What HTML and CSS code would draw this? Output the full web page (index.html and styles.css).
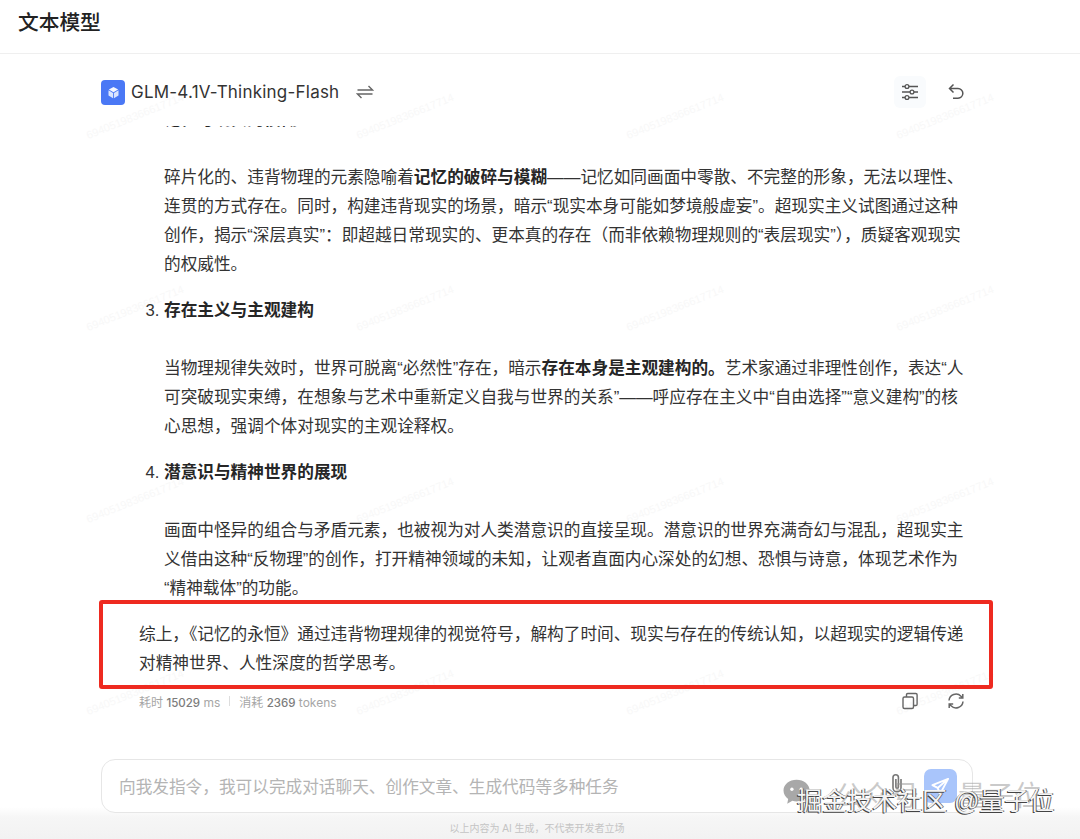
FILE: index.html
```html
<!DOCTYPE html>
<html lang="zh">
<head>
<meta charset="utf-8">
<title>文本模型</title>
<link rel="stylesheet" href="styles.css">
</head>
<body>
<div class="watermarks" aria-hidden="true">
  <span>69405198366617714</span><span>69405198366617714</span><span>69405198366617714</span><span>69405198366617714</span>
  <span>69405198366617714</span><span>69405198366617714</span><span>69405198366617714</span><span>69405198366617714</span>
  <span>69405198366617714</span><span>69405198366617714</span><span>69405198366617714</span><span>69405198366617714</span>
  <span>69405198366617714</span><span>69405198366617714</span><span>69405198366617714</span><span>69405198366617714</span>
</div>
<div class="page">
  <header class="topbar"><h1>文本模型</h1></header>
  <main class="chat">
    <div class="toolbar">
      <div class="model">
        <span class="model-logo">
          <svg viewBox="0 0 24 24" width="15" height="15"><path d="M12 3l7.500 4.300L12 11.600 4.500 7.300z" fill="#fff" opacity=".95"/><path d="M4 8.500l7.300 4.200V21L4 16.800z" fill="#dbe6ff"/><path d="M20 8.500l-7.300 4.200V21l7.300-4.200z" fill="#fff" opacity=".8"/></svg>
        </span>
        <span class="model-name">GLM-4.1V-Thinking-Flash</span>
        <svg class="swap" viewBox="0 0 18 16" width="18" height="16"><path d="M1.500 6h15L12.500 2M16.500 10h-15L5.500 14" fill="none" stroke="#666" stroke-width="1.400"/></svg>
      </div>
      <div class="tools">
        <span class="tool tool-active">
          <svg viewBox="0 0 18 18" width="18" height="18" fill="none" stroke="#555" stroke-width="1.300"><path d="M1 3.500h3M8 3.500h9M1 9h8M13 9h4M1 14.500h3M8 14.500h9"/><circle cx="6" cy="3.500" r="1.900"/><circle cx="11" cy="9" r="1.900"/><circle cx="6" cy="14.500" r="1.900"/></svg>
        </span>
        <span class="tool">
          <svg viewBox="0 0 18 18" width="18" height="18" fill="none" stroke="#555" stroke-width="1.500"><path d="M6.500 1.500L2.500 5.500l4 4M2.500 5.500h8.500a4.800 4.800 0 0 1 0 9.700H6"/></svg>
        </span>
      </div>
    </div>
    <div class="scroll">
      <div class="answer">
        <ol class="points" start="2">
          <li><p class="point-title">记忆与现实的模糊</p></li>
        </ol>
        <p class="body">碎片化的、违背物理的元素隐喻着<b>记忆的破碎与模糊</b>——记忆如同画面中零散、不完整的形象，无法以理性、<br>连贯的方式存在。同时，构建违背现实的场景，暗示“现实本身可能如梦境般虚妄”。超现实主义试图通过这种<br>创作，揭示“深层真实”：即超越日常现实的、更本真的存在（而非依赖物理规则的“表层现实”），质疑客观现实<br>的权威性。</p>
        <ol class="points" start="3">
          <li><p class="point-title">存在主义与主观建构</p></li>
        </ol>
        <p class="body">当物理规律失效时，世界可脱离“必然性”存在，暗示<b>存在本身是主观建构的。</b>艺术家通过非理性创作，表达“人<br>可突破现实束缚，在想象与艺术中重新定义自我与世界的关系”——呼应存在主义中“自由选择”“意义建构”的核<br>心思想，强调个体对现实的主观诠释权。</p>
        <ol class="points" start="4">
          <li><p class="point-title">潜意识与精神世界的展现</p></li>
        </ol>
        <p class="body">画面中怪异的组合与矛盾元素，也被视为对人类潜意识的直接呈现。潜意识的世界充满奇幻与混乱，超现实主<br>义借由这种“反物理”的创作，打开精神领域的未知，让观者直面内心深处的幻想、恐惧与诗意，体现艺术作为<br>“精神载体”的功能。</p>
        <p class="summary">综上，《记忆的永恒》通过违背物理规律的视觉符号，解构了时间、现实与存在的传统认知，以超现实的逻辑传递<br>对精神世界、人性深度的哲学思考。</p>
      </div>
    </div>
    <div class="meta">
      <div class="stats">
        <span>耗时 <em>15029</em> ms</span>
        <i class="sep"></i>
        <span>消耗 <em>2369</em> tokens</span>
      </div>
      <div class="tools">
        <span class="tool">
          <svg viewBox="0 0 18 18" width="18" height="18" fill="none" stroke="#666" stroke-width="1.400"><rect x="2" y="5" width="10.500" height="11.500" rx="1.500"/><path d="M5.500 5V2.800q0-1.300 1.300-1.300h8q1.300 0 1.300 1.300v9.400q0 1.300-1.300 1.300h-2.800"/></svg>
        </span>
        <span class="tool">
          <svg viewBox="0 0 18 18" width="18" height="18" fill="none" stroke="#666" stroke-width="1.500"><path d="M2 8.500a7 7 0 0 1 12-4.300L15.800 6M15.800 2v4h-4M16 9.500a7 7 0 0 1-12 4.300L2.200 12M2.200 16v-4h4"/></svg>
        </span>
      </div>
    </div>
  </main>
  <div class="composer-wrap">
    <div class="composer">
      <span class="placeholder">向我发指令，我可以完成对话聊天、创作文章、生成代码等多种任务</span>
      <div class="composer-actions">
        <svg class="clip" viewBox="0 0 20 28" width="16" height="24" fill="none" stroke="#777" stroke-width="2"><path d="M15 9v11a5 5 0 0 1-10 0V7a3.400 3.400 0 0 1 6.800 0v12a1.600 1.600 0 0 1-3.200 0V9"/></svg>
        <span class="send">
          <svg viewBox="0 0 20 20" width="19" height="19" fill="none" stroke="#fff" stroke-width="2" stroke-linejoin="round"><path d="M18 2L1.500 8.500 7 11.500l2.500 6.500zM18 2L7 11.500"/></svg>
        </span>
      </div>
    </div>
    <p class="disclaimer">以上内容为 AI 生成，不代表开发者立场</p>
  </div>
</div>

<div class="highlight"></div>

<div class="wechat-mark">
  <svg class="wechat-logo" viewBox="0 0 32 30" width="31" height="28"><path d="M15 2C7.300 2 1 7 1 13.500c0 3.600 2 6.800 5 9l-1 5 5.500-3c1.400.4 2.900.6 4.500.6 7.700 0 14-5.100 14-11.600S22.700 2 15 2z" fill="#a8a8a8"/><circle cx="10" cy="12" r="1.800" fill="#fff"/><circle cx="20" cy="12" r="1.800" fill="#fff"/></svg>
  <span class="wechat-name">公众号</span>
  <span class="wechat-account">量子位</span>
</div>
<div class="site-mark">掘金技术社区 @量子位</div>
</body>
</html>
```

FILE: styles.css
```css
* { box-sizing: border-box; }
html, body { margin: 0; height: 839px; overflow: hidden; }
body {
  background: #fff;
  color: #2b2b2b;
  font-family: "Liberation Sans", "Noto Sans CJK SC", sans-serif;
  position: relative;
}
.page {
  display: flex;
  flex-direction: column;
  height: 839px;
  position: relative;
}

.topbar {
  height: 54px;
  flex: none;
  padding: 8px 18px 0;
  border-bottom: 1px solid #efefef;
}
.topbar h1 {
  margin: 0;
  font-size: 20.700px;
  font-weight: 500;
  line-height: 30px;
  color: #222;
}

.chat {
  flex: none;
  height: 705px;
  padding: 0 108px 0 101px;
  display: flex;
  flex-direction: column;
}
.toolbar {
  flex: none;
  height: 72px;
  display: flex;
  align-items: center;
  justify-content: space-between;
  padding-top: 4px;
}
.model { display: flex; align-items: center; }
.model-logo {
  width: 24px;
  height: 25px;
  border-radius: 4px;
  background: #4a78f5;
  display: flex;
  align-items: center;
  justify-content: center;
}
.model-name {
  margin-left: 6px;
  font-size: 17px;
  letter-spacing: .22px;
  color: #333;
  font-family: Inter, "Liberation Sans", sans-serif;
}
.swap { margin-left: 17px; }

.tools { display: flex; gap: 14px; }
.tool {
  width: 32px;
  height: 32px;
  display: flex;
  align-items: center;
  justify-content: center;
  border-radius: 6px;
}
.tool-active { background: #f9fbfd; }

.scroll { height: 551px; flex: none; overflow: hidden; }
.answer {
  margin-top: -21px;
  padding-left: 38px;
  font-size: 16.670px;
  line-height: 29px;
  color: #333;
  white-space: nowrap;
}
.answer b, .point-title { font-weight: 600; color: #262626; }
.points { margin: 0; padding: 0 0 0 25px; }
.point-title { margin: 0; }
.body { margin: 0; padding: 29px 0 17px 25px; }
.summary { margin: 0; }

.meta {
  height: 40px;
  flex: none;
  margin-top: 4px;
  padding-left: 38px;
  display: flex;
  align-items: center;
  justify-content: space-between;
  color: #a6a6a6;
  font-family: Inter, "Noto Sans CJK SC", sans-serif;
  font-size: 12px;
}
.stats { display: flex; align-items: center; gap: 9px; }
.stats em { font-style: normal; font-weight: 500; color: #7c7c7c; font-size: 11.500px; }
.sep { width: 1px; height: 10px; background: #ddd; }

.composer-wrap {
  flex: 1;
  background: linear-gradient(#fff 0, #fff 48px, #f6f6f6 58px, #f2f2f2 100%);
  padding: 0 107px 0 101px;
  display: flex;
  flex-direction: column;
  align-items: center;
}
.composer {
  width: 872px;
  height: 54px;
  flex: none;
  border: 1px solid #e6e6e6;
  border-radius: 14px;
  background: #fff;
  display: flex;
  align-items: center;
  justify-content: space-between;
  padding: 0 15px 0 17px;
}
.placeholder { font-size: 16.670px; color: #b4b4b4; }
.composer-actions { display: flex; align-items: center; gap: 19px; }
.clip { margin-top: -6px; }
.send {
  width: 33px;
  height: 34px;
  border-radius: 7px;
  background: #a9c5fb;
  display: flex;
  align-items: center;
  justify-content: center;
}
.disclaimer {
  margin: 9px 0 0;
  font-size: 10px;
  line-height: 14px;
  color: #c4c4c4;
}

.watermarks {
  position: absolute;
  left: 0;
  top: 20px;
  width: 1080px;
  height: 780px;
  display: grid;
  grid-template-columns: repeat(4, 1fr);
  grid-auto-rows: 192px;
  pointer-events: none;
  overflow: hidden;
}
.watermarks span {
  display: block;
  font-size: 11px;
  color: #f8f8f8;
  transform: rotate(-22deg);
  align-self: center;
  justify-self: center;
}

.highlight {
  position: absolute;
  left: 99px;
  top: 600px;
  width: 894px;
  height: 89px;
  border: 4px solid #ee2a20;
  border-radius: 3px;
}

.wechat-mark {
  position: absolute;
  left: 782px;
  top: 780px;
  width: 270px;
  height: 34px;
  display: flex;
  align-items: center;
  color: rgba(150, 150, 150, .5);
  font-size: 28px;
  line-height: 34px;
}
.wechat-logo { margin-top: -10px; }
.wechat-name { margin-left: 22px; }
.wechat-account { position: absolute; left: 176px; }

.site-mark {
  position: absolute;
  left: 797px;
  top: 784px;
  font-size: 25px;
  line-height: 34px;
  white-space: nowrap;
  color: #f4f4f4;
  text-shadow: -1px 1px 0 #444, 1px 0 0 #666;
}
```
